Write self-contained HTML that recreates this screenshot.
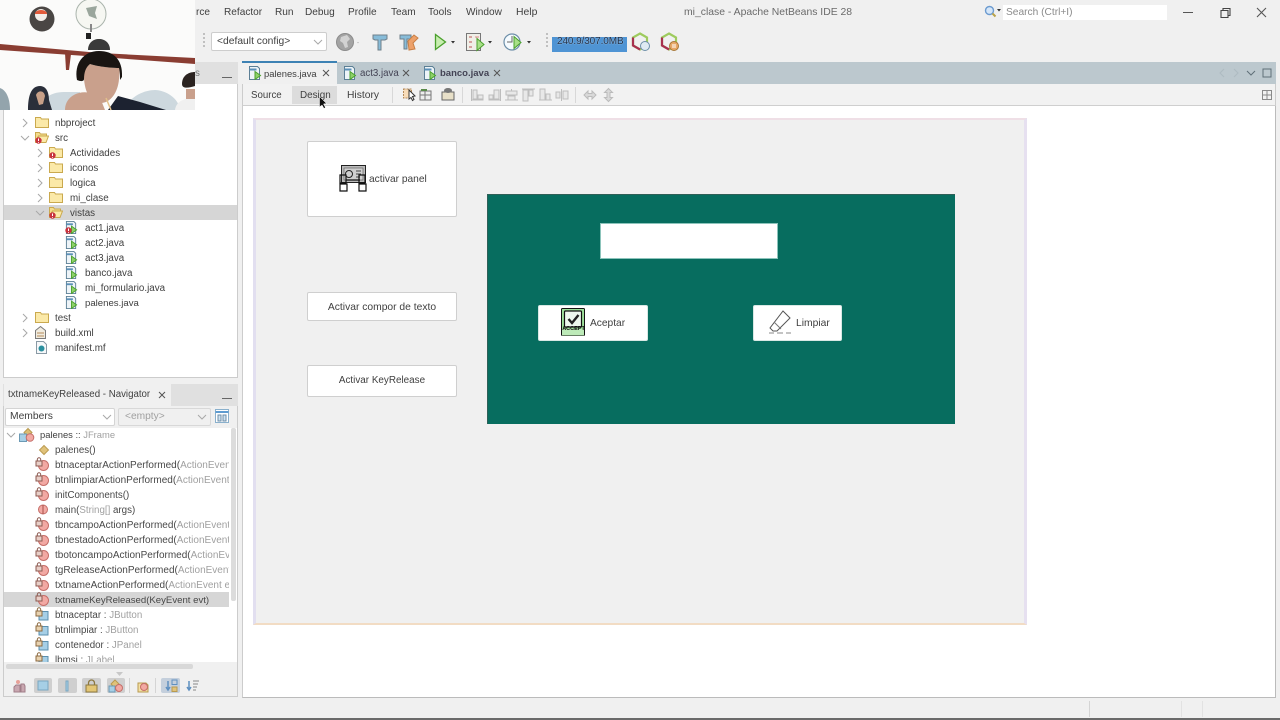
<!DOCTYPE html>
<html lang="es"><head><meta charset="utf-8"><title>mi_clase - Apache NetBeans IDE 28</title>
<style>
html,body{margin:0;padding:0;background:#f0f0f0}
body{width:1280px;height:720px;overflow:hidden;position:relative;font-family:"Liberation Sans",sans-serif;color:#333}
#w{position:absolute;left:0;top:0;width:1280px;height:720px;overflow:hidden;background:#f0f0f0;filter:blur(.35px)}
.b{position:absolute;box-sizing:border-box}
.t{position:absolute;white-space:nowrap;font-size:9.8px;line-height:14px;color:#3f3f3f;margin-top:1px}
.n{margin-top:0;font-size:10.100px}
.m{font-size:9.750px;color:#484848}
.c{font-size:10px}
.g{color:#a0a0a0}
.clip{position:absolute;overflow:hidden;white-space:nowrap}
svg{position:absolute;overflow:visible}
.btn{position:absolute;box-sizing:border-box;background:#fff;border:1px solid #cfcfcf;border-radius:2px}
</style></head><body><div id="w">
<svg width="0" height="0" style="position:absolute">
<defs>
<symbol id="folder" viewBox="0 0 14 12"><path d="M.5 1.500h5l1 1.500h7v8.500h-13z" fill="#fbe9a8" stroke="#caa94e"/></symbol>
<symbol id="ofolder" viewBox="0 0 14 12"><path d="M.5 1.500h4l1 1.500h6v2H3.500l-3 6z" fill="#f4dc8c" stroke="#caa94e"/><path d="M3.500 5h10l-2.500 6.500H.5z" fill="#fbe9a8" stroke="#caa94e"/></symbol>
<symbol id="err" viewBox="0 0 7 7"><circle cx="3.500" cy="3.500" r="3.200" fill="#c8333e"/><path d="M3.500 1.500v2.500M3.500 5v.8" stroke="#fff"/></symbol>
<symbol id="java" viewBox="0 0 14 14"><path d="M1.500.5h8l2 2v11h-10z" fill="#eef4f8" stroke="#5c7f95"/><path d="M1.500 3.500h7" stroke="#5c90b8" stroke-width="2"/><path d="M7 5.500l5.500 4-5.500 4z" fill="#8ed06a" stroke="#4aa02c"/></symbol>
<symbol id="meth" viewBox="0 0 14 14"><circle cx="8.500" cy="8.500" r="5" fill="#f2a9a3" stroke="#c56e69"/><rect x="1" y="4" width="6" height="5" fill="#e8cfc8" stroke="#8c5a50"/><path d="M2.300 4V2.500a1.700 1.700 0 0 1 3.400 0V4" fill="none" stroke="#8c5a50"/></symbol>
<symbol id="field" viewBox="0 0 14 14"><rect x="4" y="4.500" width="9" height="8.500" fill="#a6cfe6" stroke="#5b8fae"/><rect x="1" y="4" width="6" height="5" fill="#e8d2b0" stroke="#8c6a40"/><path d="M2.300 4V2.500a1.700 1.700 0 0 1 3.400 0V4" fill="none" stroke="#8c6a40"/></symbol>
<symbol id="cr" viewBox="0 0 8 10"><path d="M2 1l4 4-4 4" fill="none" stroke="#a8a8a8"/></symbol>
<symbol id="cd" viewBox="0 0 10 8"><path d="M1 2l4 4 4-4" fill="none" stroke="#a8a8a8"/></symbol>
<symbol id="x" viewBox="0 0 8 8"><path d="M1 1l6 6M7 1l-6 6" fill="none" stroke="#555"/></symbol>
</defs></svg>

<!-- menu -->
<div class="t n" style="left:196px;top:6px">rce</div>
<div class="t n" style="left:224px;top:6px">Refactor</div>
<div class="t n" style="left:275px;top:6px">Run</div>
<div class="t n" style="left:305px;top:6px">Debug</div>
<div class="t n" style="left:348px;top:6px">Profile</div>
<div class="t n" style="left:391px;top:6px">Team</div>
<div class="t n" style="left:428px;top:6px">Tools</div>
<div class="t n" style="left:466px;top:6px">Window</div>
<div class="t n" style="left:516px;top:6px;font-size:10.400px">Help</div>
<div class="t n" style="left:684px;top:6px;font-size:10.400px;color:#6a6a6a">mi_clase - Apache NetBeans IDE 28</div>

<svg style="left:984px;top:5px" width="16" height="14"><circle cx="5.500" cy="5.500" r="4" fill="#d5e6f8" stroke="#6c9bd0" stroke-width="1.400"/><path d="M8.500 8.500l3 3" stroke="#b8a24a" stroke-width="2"/><path d="M13 4h4l-2 2.500z" fill="#333"/></svg>
<div class="b" style="left:1003px;top:5px;width:164px;height:15px;background:#fff"></div>
<div class="t n" style="left:1006px;top:5px;margin-top:0;font-size:10.200px;line-height:15px;color:#8a8a8a">Search (Ctrl+I)</div>
<svg style="left:1180px;top:6px" width="90" height="14"><path d="M3 6.500h10" stroke="#555"/><path d="M41 4.500h7v7h-7zM43 4.500V2.500h7v7h-2" fill="none" stroke="#444" stroke-width="1.100"/><path d="M77 2l9 9M86 2l-9 9" stroke="#555" stroke-width="1.100"/></svg>

<!-- toolbar -->
<div class="b" style="left:203px;top:33px;width:2px;height:14px;border-left:2px dotted #c0c0c0"></div>
<div class="b" style="left:211px;top:32px;width:116px;height:19px;background:#fff;border:1px solid #cdcdcd;border-radius:2px"></div>
<div class="t" style="left:217px;top:34px;font-size:10.300px">&lt;default config&gt;</div>
<svg style="left:313px;top:38px" width="10" height="8"><use href="#cd" width="10" height="8"/></svg>
<svg style="left:336px;top:32px" width="24" height="20"><circle cx="9" cy="10" r="8.500" fill="#a3a3a3" stroke="#8c8c8c"/><path d="M5 5l6-2 3 4-3 3 1 5-3 1-2-5-3-2z" fill="#d2d2d2"/><path d="M21 10l2 0-1 1.500z" fill="#bbb"/></svg>
<svg style="left:372px;top:33px" width="16" height="18"><path d="M1 2h14v4l-2 1H9v10H6V7H3L1 6z" fill="#87bcd9" stroke="#6f7f8a"/></svg>
<svg style="left:399px;top:33px" width="20" height="18"><path d="M1 2h11v4H8v10H5V6H1z" fill="#87bcd9" stroke="#6f7f8a"/><path d="M9 8l6-6 4 3-5 5 2 6-6 1z" fill="#eda16a" stroke="#c87f45"/></svg>
<svg style="left:434px;top:33px" width="22" height="18"><path d="M1.500 1.500l10 7.500-10 7.500z" fill="#c8eeb0" stroke="#4aa02c" stroke-width="1.300"/><path d="M17 8h4l-2 2.500z" fill="#333"/></svg>
<svg style="left:466px;top:33px" width="26" height="18"><rect x=".5" y=".5" width="14" height="17" fill="#f0efe8" stroke="#777"/><path d="M3 4h3M3 9h3M3 14h3" stroke="#b55"/><path d="M9 4h4" stroke="#d88"/><path d="M11 5.500l7 6-7 6z" fill="#a8e088" stroke="#4aa02c"/><path d="M22 8h4l-2 2.500z" fill="#333"/></svg>
<svg style="left:503px;top:33px" width="30" height="18"><circle cx="9" cy="9" r="8" fill="#f5fbff" stroke="#6c8ea8" stroke-width="1.200"/><path d="M9 3v6H4" fill="none" stroke="#666"/><path d="M11 3.500l7 6-7 6z" fill="#a8e088" stroke="#4aa02c"/><path d="M24 8h4l-2 2.500z" fill="#333"/></svg>
<div class="b" style="left:546px;top:33px;width:2px;height:14px;border-left:2px dotted #c0c0c0"></div>
<div class="b" style="left:552px;top:37px;width:75px;height:15px;background:#4f94d4"></div>
<div class="t" style="left:557px;top:34px;font-size:10px;color:#1f2f48;letter-spacing:-.1px;text-shadow:0 0 1px #dfe8f2">240.9/307.0MB</div>
<svg style="left:631px;top:32px" width="20" height="20"><path d="M9 1.500l7 4v8l-7 4-7-4v-8z" fill="none" stroke="#9ecb5e" stroke-width="2.200"/><path d="M2 5.500v8l7 4" fill="none" stroke="#a8304f" stroke-width="2.200"/><circle cx="14" cy="14" r="4.500" fill="#dfeaf2" stroke="#6c8ea8"/></svg>
<svg style="left:660px;top:32px" width="20" height="20"><path d="M9 1.500l7 4v8l-7 4-7-4v-8z" fill="none" stroke="#9ecb5e" stroke-width="2.200"/><path d="M2 5.500v8l7 4" fill="none" stroke="#a8304f" stroke-width="2.200"/><circle cx="14" cy="14" r="4.500" fill="#e8a868" stroke="#a87838"/><path d="M13 12v4M15 12v4" stroke="#fff"/></svg>

<!-- left panel top -->
<div class="b" style="left:195px;top:62px;width:43px;height:22px;background:#e0e0e0"></div>
<div class="t" style="left:195px;top:66px;color:#777">s</div>
<div class="b" style="left:222px;top:77px;width:10px;height:1px;background:#666"></div>
<div class="b" style="left:3px;top:84px;width:235px;height:294px;background:#fff;border-left:1px solid #ccc;border-right:1px solid #ccc;border-bottom:1px solid #ccc"></div>
<div class="b" style="left:4px;top:205px;width:233px;height:15px;background:#d6d6d6"></div>

<!-- tree -->
<svg style="left:21px;top:118px" width="8" height="10"><use href="#cr" width="8" height="10"/></svg>
<svg style="left:35px;top:116px" width="14" height="12"><use href="#folder" width="14" height="12"/></svg>
<div class="t" style="left:55px;top:116px">nbproject</div>
<svg style="left:20px;top:134px" width="10" height="8"><use href="#cd" width="10" height="8"/></svg>
<svg style="left:35px;top:131px" width="14" height="12"><use href="#ofolder" width="14" height="12"/></svg>
<svg style="left:35px;top:137px" width="7" height="7"><use href="#err" width="7" height="7"/></svg>
<div class="t" style="left:55px;top:131px">src</div>
<svg style="left:36px;top:148px" width="8" height="10"><use href="#cr" width="8" height="10"/></svg>
<svg style="left:49px;top:146px" width="14" height="12"><use href="#folder" width="14" height="12"/></svg>
<svg style="left:49px;top:152px" width="7" height="7"><use href="#err" width="7" height="7"/></svg>
<div class="t" style="left:70px;top:146px">Actividades</div>
<svg style="left:36px;top:163px" width="8" height="10"><use href="#cr" width="8" height="10"/></svg>
<svg style="left:49px;top:161px" width="14" height="12"><use href="#folder" width="14" height="12"/></svg>
<div class="t" style="left:70px;top:161px">iconos</div>
<svg style="left:36px;top:178px" width="8" height="10"><use href="#cr" width="8" height="10"/></svg>
<svg style="left:49px;top:176px" width="14" height="12"><use href="#folder" width="14" height="12"/></svg>
<div class="t" style="left:70px;top:176px">logica</div>
<svg style="left:36px;top:193px" width="8" height="10"><use href="#cr" width="8" height="10"/></svg>
<svg style="left:49px;top:191px" width="14" height="12"><use href="#folder" width="14" height="12"/></svg>
<div class="t" style="left:70px;top:191px">mi_clase</div>
<svg style="left:35px;top:209px" width="10" height="8"><use href="#cd" width="10" height="8"/></svg>
<svg style="left:49px;top:206px" width="14" height="12"><use href="#ofolder" width="14" height="12"/></svg>
<svg style="left:49px;top:212px" width="7" height="7"><use href="#err" width="7" height="7"/></svg>
<div class="t" style="left:70px;top:206px">vistas</div>
<svg style="left:65px;top:221px" width="13" height="13"><use href="#java" width="13" height="13"/></svg>
<svg style="left:65px;top:227px" width="7" height="7"><use href="#err" width="7" height="7"/></svg>
<div class="t" style="left:85px;top:221px">act1.java</div>
<svg style="left:65px;top:236px" width="13" height="13"><use href="#java" width="13" height="13"/></svg>
<div class="t" style="left:85px;top:236px">act2.java</div>
<svg style="left:65px;top:251px" width="13" height="13"><use href="#java" width="13" height="13"/></svg>
<div class="t" style="left:85px;top:251px">act3.java</div>
<svg style="left:65px;top:266px" width="13" height="13"><use href="#java" width="13" height="13"/></svg>
<div class="t" style="left:85px;top:266px">banco.java</div>
<svg style="left:65px;top:281px" width="13" height="13"><use href="#java" width="13" height="13"/></svg>
<div class="t" style="left:85px;top:281px">mi_formulario.java</div>
<svg style="left:65px;top:296px" width="13" height="13"><use href="#java" width="13" height="13"/></svg>
<div class="t" style="left:85px;top:296px;font-size:9.600px">palenes.java</div>
<svg style="left:21px;top:313px" width="8" height="10"><use href="#cr" width="8" height="10"/></svg>
<svg style="left:35px;top:311px" width="14" height="12"><use href="#folder" width="14" height="12"/></svg>
<div class="t" style="left:55px;top:311px">test</div>
<svg style="left:21px;top:328px" width="8" height="10"><use href="#cr" width="8" height="10"/></svg>
<svg style="left:35px;top:326px" width="12" height="13"><path d="M.5 4.500l5-4 5 4v8h-10z" fill="#f0ece0" stroke="#7a7a7a"/><path d="M2 7h7M2 10h7" stroke="#b58a5a"/></svg>
<div class="t" style="left:55px;top:326px">build.xml</div>
<svg style="left:36px;top:341px" width="11" height="13"><path d="M.5.500h7l3 3v9h-10z" fill="#f6f8fa" stroke="#8a9aa5"/><circle cx="5.500" cy="7.500" r="3" fill="#2a8f9e"/></svg>
<div class="t" style="left:55px;top:341px">manifest.mf</div>

<!-- navigator -->
<div class="b" style="left:3px;top:384px;width:235px;height:313px;background:#fff;border:1px solid #ccc;border-top:0"></div>
<div class="b" style="left:3px;top:384px;width:235px;height:22px;background:#e0e0e0"></div>
<div class="b" style="left:4px;top:384px;width:167px;height:22px;background:#f0f0f0"></div>
<div class="t" style="left:8px;top:387px;font-size:9.700px">txtnameKeyReleased - Navigator</div>
<svg style="left:158px;top:391px" width="8" height="8"><use href="#x" width="8" height="8"/></svg>
<div class="b" style="left:222px;top:398px;width:10px;height:1px;background:#666"></div>
<div class="b" style="left:4px;top:406px;width:233px;height:22px;background:#f0f0f0"></div>
<div class="b" style="left:5px;top:408px;width:110px;height:18px;background:#fff;border:1px solid #d4d4d4;border-radius:2px"></div>
<div class="t" style="left:10px;top:409px;font-size:10.300px">Members</div>
<svg style="left:102px;top:413px" width="10" height="8"><use href="#cd" width="10" height="8"/></svg>
<div class="b" style="left:118px;top:408px;width:93px;height:18px;background:#f0f0f0;border:1px solid #d8d8d8;border-radius:2px"></div>
<div class="t g" style="left:125px;top:409px;font-size:10.200px">&lt;empty&gt;</div>
<svg style="left:197px;top:413px" width="10" height="8"><use href="#cd" width="10" height="8"/></svg>
<svg style="left:215px;top:409px" width="15" height="15"><rect x=".5" y=".5" width="13" height="13" fill="#fff" stroke="#8ab0cc"/><path d="M.5 3h13" stroke="#5e9bd0" stroke-width="2"/><path d="M3 6h3v6H3zM8 6h3v6H8z" fill="#cfe2f0" stroke="#6c8ea8"/></svg>

<div class="b" style="left:4px;top:592px;width:225px;height:15px;background:#d6d6d6"></div>
<svg style="left:6px;top:431px" width="10" height="8"><use href="#cd" width="10" height="8"/></svg>
<svg style="left:19px;top:428px" width="16" height="14"><path d="M9 .5l4 4-4 4-4-4z" fill="#dbbd74" stroke="#b89a50"/><rect x=".5" y="6" width="7" height="7.500" fill="#a6cfe6" stroke="#6c9ab5"/><circle cx="11" cy="9.500" r="3.800" fill="#f2a9a3" stroke="#c56e69"/></svg>
<div class="t" style="left:40px;top:427px;font-size:9.400px">palenes :: <span class="g">JFrame</span></div>
<svg style="left:39px;top:445px" width="10" height="10"><path d="M5 .5L9.500 5 5 9.500.5 5z" fill="#e0c27a" stroke="#bc9c52"/></svg>
<div class="t m" style="left:55px;top:443px">palenes()</div>
<svg style="left:35px;top:457px" width="14" height="14"><use href="#meth" width="14" height="14"/></svg>
<div class="clip t m c" style="left:55px;top:458px;width:174px">btnaceptarActionPerformed(<span class="g">ActionEvent evt)</span></div>
<svg style="left:35px;top:472px" width="14" height="14"><use href="#meth" width="14" height="14"/></svg>
<div class="clip t m c" style="left:55px;top:473px;width:174px">btnlimpiarActionPerformed(<span class="g">ActionEvent evt)</span></div>
<svg style="left:35px;top:487px" width="14" height="14"><use href="#meth" width="14" height="14"/></svg>
<div class="t m" style="left:55px;top:488px">initComponents()</div>
<svg style="left:38px;top:504px" width="10" height="11"><circle cx="5" cy="5.500" r="4.500" fill="#f2a9a3" stroke="#c56e69"/><path d="M5 1v9" stroke="#a8504a"/></svg>
<div class="t m" style="left:55px;top:503px">main(<span class="g">String[]</span> args)</div>
<svg style="left:35px;top:517px" width="14" height="14"><use href="#meth" width="14" height="14"/></svg>
<div class="clip t m c" style="left:55px;top:518px;width:174px">tbncampoActionPerformed(<span class="g">ActionEvent evt)</span></div>
<svg style="left:35px;top:532px" width="14" height="14"><use href="#meth" width="14" height="14"/></svg>
<div class="clip t m c" style="left:55px;top:533px;width:174px">tbnestadoActionPerformed(<span class="g">ActionEvent evt)</span></div>
<svg style="left:35px;top:547px" width="14" height="14"><use href="#meth" width="14" height="14"/></svg>
<div class="clip t m c" style="left:55px;top:548px;width:174px">tbotoncampoActionPerformed(<span class="g">ActionEvent evt)</span></div>
<svg style="left:35px;top:562px" width="14" height="14"><use href="#meth" width="14" height="14"/></svg>
<div class="clip t m c" style="left:55px;top:563px;width:174px">tgReleaseActionPerformed(<span class="g">ActionEvent evt)</span></div>
<svg style="left:35px;top:577px" width="14" height="14"><use href="#meth" width="14" height="14"/></svg>
<div class="clip t m c" style="left:55px;top:578px;width:174px">txtnameActionPerformed(<span class="g">ActionEvent evt)</span></div>
<svg style="left:35px;top:592px" width="14" height="14"><use href="#meth" width="14" height="14"/></svg>
<div class="t m" style="left:55px;top:593px;font-size:9.600px">txtnameKeyReleased(KeyEvent evt)</div>
<svg style="left:35px;top:607px" width="14" height="14"><use href="#field" width="14" height="14"/></svg>
<div class="t m" style="left:55px;top:608px">btnaceptar : <span class="g">JButton</span></div>
<svg style="left:35px;top:622px" width="14" height="14"><use href="#field" width="14" height="14"/></svg>
<div class="t m" style="left:55px;top:623px">btnlimpiar : <span class="g">JButton</span></div>
<svg style="left:35px;top:637px" width="14" height="14"><use href="#field" width="14" height="14"/></svg>
<div class="t m" style="left:55px;top:638px">contenedor : <span class="g">JPanel</span></div>
<svg style="left:35px;top:652px" width="14" height="14"><use href="#field" width="14" height="14"/></svg>
<div class="t m" style="left:55px;top:653px">lbmsj : <span class="g">JLabel</span></div>

<div class="b" style="left:4px;top:662px;width:233px;height:34px;background:#f0f0f0"></div>
<div class="b" style="left:231px;top:428px;width:5px;height:173px;background:#dcdcdc;border-radius:2px"></div>
<div class="b" style="left:6px;top:664px;width:187px;height:5px;background:#d8d8d8;border-radius:2px"></div>
<svg style="left:116px;top:672px" width="8" height="4"><path d="M0 0h7l-3.500 4z" fill="#c8c8c8"/></svg>
<!-- navigator filter buttons -->
<div class="b" style="left:34px;top:678px;width:18px;height:15px;background:#cfcfcf;border-radius:2px"></div>
<div class="b" style="left:58px;top:678px;width:19px;height:15px;background:#cfcfcf;border-radius:2px"></div>
<div class="b" style="left:82px;top:678px;width:19px;height:15px;background:#cfcfcf;border-radius:2px"></div>
<div class="b" style="left:107px;top:678px;width:18px;height:15px;background:#cfcfcf;border-radius:2px"></div>
<div class="b" style="left:161px;top:678px;width:19px;height:15px;background:#c4cfdc;border-radius:2px"></div>
<svg style="left:13px;top:679px" width="190" height="14">
<path d="M3 6h4v7H1V8zM8 5h3l1 2v6H8z" fill="#c9a7b0" stroke="#a07d88"/><circle cx="5" cy="3" r="2" fill="#e8a098"/>
<rect x="25" y="2" width="10" height="9" fill="#a6cfe6" stroke="#7aa7c2"/>
<rect x="53" y="2" width="2" height="10" fill="#a6cfe6" stroke="#7aa7c2"/>
<rect x="73" y="6" width="11" height="7" fill="#e3c675" stroke="#8c7840"/><path d="M75.500 6V4a3 3 0 0 1 6 0v2" fill="none" stroke="#8c7840" stroke-width="1.300"/>
<path d="M102 1l4 4-4 4-4-4z" fill="#e0c27a" stroke="#b89a50"/><rect x="96" y="7" width="6" height="6" fill="#a6cfe6" stroke="#6c9ab5"/><circle cx="106" cy="9" r="3.500" fill="#f2a9a3" stroke="#c56e69"/>
<path d="M125 4h8l2 2v7h-10z" fill="#f3e0a4" stroke="#b89a50"/><circle cx="131" cy="8" r="3.500" fill="#f2a9a3" stroke="#c56e69"/>
<path d="M155 2v8M153 8l2 3 2-3" fill="none" stroke="#5e8fc0" stroke-width="1.500"/><rect x="159" y="1" width="5" height="4.500" fill="none" stroke="#5e8fc0"/><rect x="159" y="8" width="5" height="4.500" fill="#e0c27a" stroke="#b89a50"/>
<path d="M176 2v8M174 8l2 3 2-3" fill="none" stroke="#5e8fc0" stroke-width="1.500"/><path d="M180 2h6M180 5h5M180 8h4M180 11h3" stroke="#888"/>
</svg>
<div class="b" style="left:129px;top:678px;width:1px;height:15px;background:#d4d4d4"></div>
<div class="b" style="left:155px;top:678px;width:1px;height:15px;background:#d4d4d4"></div>

<!-- editor -->
<div class="b" style="left:242px;top:62px;width:1034px;height:22px;background:#bcc8ce"></div>
<div class="b" style="left:242px;top:61px;width:95px;height:23px;background:#f0f0f0;border-top:2px solid #3d82b4"></div>
<svg style="left:248px;top:66px" width="14" height="14"><use href="#java" width="14" height="14"/></svg>
<div class="t" style="left:264px;top:66px;font-size:9.400px">palenes.java</div>
<svg style="left:322px;top:69px" width="8" height="8"><use href="#x" width="8" height="8"/></svg>
<svg style="left:343px;top:66px" width="14" height="14"><use href="#java" width="14" height="14"/></svg>
<div class="t" style="left:360px;top:66px;font-size:9.700px;color:#445">act3.java</div>
<svg style="left:402px;top:69px" width="8" height="8"><use href="#x" width="8" height="8"/></svg>
<svg style="left:423px;top:66px" width="14" height="14"><use href="#java" width="14" height="14"/></svg>
<div class="t" style="left:440px;top:66px;font-size:9.500px;font-weight:bold;color:#445">banco.java</div>
<svg style="left:493px;top:69px" width="8" height="8"><use href="#x" width="8" height="8"/></svg>
<svg style="left:1218px;top:67px" width="56" height="12"><path d="M6 2L2 6l4 4M16 2l4 4-4 4" fill="none" stroke="#aebbc2"/><path d="M29 4l4 4 4-4" fill="none" stroke="#5f6f78"/><rect x="45" y="2" width="8" height="8" fill="none" stroke="#5f6f78"/></svg>

<div class="b" style="left:242px;top:84px;width:1034px;height:22px;background:#f2f2f2;border-bottom:1px solid #cfcfcf;border-left:1px solid #ccc;border-right:1px solid #ccc"></div>
<div class="t" style="left:251px;top:88px;font-size:9.700px">Source</div>
<div class="b" style="left:292px;top:86px;width:45px;height:18px;background:#dcdcdc"></div>
<div class="t" style="left:300px;top:88px;font-size:9.900px">Design</div>
<div class="t" style="left:347px;top:88px;font-size:10.300px">History</div>
<div class="b" style="left:392px;top:87px;width:1px;height:16px;background:#d8d8d8"></div>
<svg style="left:402px;top:87px" width="54" height="16"><rect x="1.500" y="2" width="8" height="9" fill="#f8dcb8" stroke="#b58a5a" stroke-dasharray="2 1"/><path d="M7 3l6 6-2.500.5 1.500 3-1.500 1-1.500-3L7 12z" fill="#fff" stroke="#333"/><rect x="18" y="4" width="11" height="9" fill="#eee" stroke="#777"/><path d="M18 8h11M23 4v9" stroke="#777"/><path d="M19 3h6" stroke="#5a8a4a" stroke-width="2"/><rect x="40" y="5" width="12" height="8" fill="#e8e0c8" stroke="#666"/><ellipse cx="46" cy="3.500" rx="4" ry="2.500" fill="#777"/></svg>
<div class="b" style="left:462px;top:87px;width:1px;height:16px;background:#d8d8d8"></div>
<svg style="left:470px;top:87px" width="100" height="16"><g fill="#e8e8e8" stroke="#bdbdbd"><path d="M1.500 2v12M13.500 13h-12"/><rect x="3" y="3" width="4" height="9"/><rect x="8" y="8" width="5" height="4"/><path d="M30.500 2v12M18.500 13h12"/><rect x="24" y="3" width="5" height="9"/><rect x="19" y="8" width="4" height="4"/><path d="M35 13h13M41.500 2v2"/><rect x="36" y="4" width="11" height="4"/><rect x="38" y="9" width="7" height="4"/><path d="M52 2h13"/><rect x="53" y="3" width="5" height="11"/><rect x="59" y="3" width="4" height="6"/><path d="M69 13h13"/><rect x="70" y="2" width="5" height="11"/><rect x="76" y="7" width="4" height="6"/><path d="M91.500 2v12"/><rect x="86" y="5" width="4" height="6"/><rect x="93" y="4" width="5" height="8"/></g></svg>
<div class="b" style="left:575px;top:87px;width:1px;height:16px;background:#d8d8d8"></div>
<svg style="left:583px;top:88px" width="34" height="14"><path d="M1 7l4-4v2.500h4V3l4 4-4 4V8.500H5V11z" fill="#d9d9d9" stroke="#bbb"/><path d="M25.500 .5l4 4h-2.500v5h2.500l-4 4-4-4H24v-5h-2.500z" fill="#d9d9d9" stroke="#bbb"/></svg>
<svg style="left:1262px;top:90px" width="10" height="10"><rect x=".5" y=".5" width="9" height="9" fill="none" stroke="#8a8a8a"/><path d="M5 .5v9M.5 5h9" stroke="#8a8a8a"/></svg>

<div class="b" style="left:242px;top:106px;width:1034px;height:592px;background:#fff;border-left:1px solid #ccc;border-right:1px solid #bbb;border-bottom:1px solid #bbb"></div>

<!-- form -->
<div class="b" style="left:253px;top:118px;width:774px;height:507px;background:#f0f0f0;border-left:3px solid #e2dff0;border-right:3px solid #e6e0f0;border-top:2px solid #efdfe6;border-bottom:2px solid #f2dcc4"></div>
<div class="btn" style="left:307px;top:141px;width:150px;height:76px"></div>
<svg style="left:339px;top:165px" width="28" height="27"><rect x="2.500" y=".5" width="24" height="17" fill="#bcbcbc" stroke="#222"/><rect x="5" y="3" width="19" height="12" fill="#cfcfcf" stroke="#555" stroke-width=".6"/><circle cx="10" cy="9" r="3.500" fill="none" stroke="#222"/><path d="M17 6h5M17 9h5M17 12h4" stroke="#444"/><path d="M1 10h6v8H1zM20 10h6v8h-6z" fill="none" stroke="#111" stroke-width="1.200"/><path d="M1 19h7v7H1zM20 19h7v7h-7zM7 15h14" fill="#fff" stroke="#111" stroke-width="1.200"/></svg>
<div class="t" style="left:369px;top:172px;font-size:10.200px">activar panel</div>
<div class="btn" style="left:307px;top:292px;width:150px;height:29px"></div>
<div class="t" style="left:307px;top:300px;width:150px;text-align:center;font-size:10.300px">Activar compor de texto</div>
<div class="btn" style="left:307px;top:365px;width:150px;height:32px"></div>
<div class="t" style="left:307px;top:373px;width:150px;text-align:center;font-size:9.900px">Activar KeyRelease</div>

<div class="b" style="left:487px;top:194px;width:468px;height:230px;background:#076d5f;border-top:1px solid #2f5f57;border-left:1px solid #2f5f57"></div>
<div class="b" style="left:600px;top:223px;width:178px;height:36px;background:#fff;border:1px solid #8cc4bb"></div>
<div class="btn" style="left:538px;top:305px;width:110px;height:36px;border-color:#d8e8e4"></div>
<svg style="left:561px;top:308px" width="25" height="29"><rect x=".5" y=".5" width="23" height="27" rx="1" fill="#9ee09a" stroke="#111"/><rect x="3.500" y="3" width="17" height="16" rx="1" fill="#eef8ee" stroke="#111" stroke-width="1.200"/><path d="M7.500 11l3.500 4 6.500-8" fill="none" stroke="#222" stroke-width="2.400"/><rect x="1" y="21" width="22" height="6.500" fill="#bdeab8"/></svg>
<div class="t" style="left:561px;top:323px;font-size:5.500px;line-height:11px;width:25px;text-align:center;font-weight:bold;color:#111">ACCEPT</div>
<div class="t" style="left:590px;top:316px;font-size:10.200px">Aceptar</div>
<div class="btn" style="left:753px;top:305px;width:89px;height:36px;border-color:#d8e8e4"></div>
<svg style="left:768px;top:310px" width="24" height="25"><path d="M15 1l7 7L9 21H5l-3-3z" fill="#fff" stroke="#555"/><path d="M6 12l7 7" stroke="#777"/><path d="M1 23h5M9 23h6M18 23h5" stroke="#888"/></svg>
<div class="t" style="left:796px;top:316px;font-size:10.300px">Limpiar</div>

<!-- status bar -->
<div class="b" style="left:1089px;top:701px;width:1px;height:16px;background:#d4d4d4"></div>
<div class="b" style="left:1181px;top:701px;width:1px;height:16px;background:#e2e2e2"></div>
<div class="b" style="left:1202px;top:701px;width:1px;height:16px;background:#e2e2e2"></div>
<div class="b" style="left:0;top:718px;width:1280px;height:2px;background:#6a6a6a"></div>

<!-- webcam -->
<svg style="left:0;top:0" width="195" height="110" viewBox="0 0 195 110">
<rect width="195" height="110" fill="#fbfbfa"/>
<path d="M0 44l100 9 95 5v6l-95-7L0 50z" fill="#8a3d32"/>
<path d="M65 53l6 1-2 16h-3z" fill="#8a3d32"/>
<path d="M88 50c0-7 5-11 11-11s11 4 11 11z" fill="#3a3a3a"/>
<circle cx="42" cy="19" r="12.500" fill="#4a4644"/><circle cx="41" cy="15" r="6" fill="#f2ede8"/><path d="M35 14a6 4 0 0 1 12 0z" fill="#e25a3a"/>
<circle cx="91" cy="14" r="15" fill="#f6f7f2" stroke="#aab4ac"/><path d="M86 8l11-2-2 7 2 6-8-3z" fill="#9aa69c"/><rect x="90" y="24" width="2" height="8" fill="#888"/><rect x="86" y="33" width="5" height="6" fill="#222"/>
<path d="M40 110c0-10 10-18 24-18h16v18zM125 110c4-14 20-20 30-20s24 8 25 20z" fill="#cdd8de"/>
<path d="M0 88c6 2 10 10 10 22H0z" fill="#93a4ac"/>
<path d="M28 110c0-14 3-24 12-24 8 0 9 10 9 14l3 10z" fill="#2a2f3a"/>
<path d="M36 95c2-5 8-5 9 1l-2 8-4 1z" fill="#c7a088"/>
<path d="M118 96l22 6 26 8h-58z" fill="#1c2230"/>
<path d="M84 70c-1 18 4 32 17 33 9 0 17-10 18-24l1-11c-10 0-24-2-30-4-3 2-5 4-6 6z" fill="#c9a08c"/>
<path d="M77 80c-3-16 6-29 22-29 14 0 24 8 23 26l-2 3c0-5 0-8-1-12-10 0-23-2-29-4-4 3-6 8-6 15 0 2-2 3-7 1z" fill="#191512"/>
<path d="M65 110c0-9 6-15 14-17 8-2 16 0 22 7l4 10z" fill="#c9a08c"/>
<path d="M106 98l5 12" stroke="#e2c08a" stroke-width="1.500"/>
<path d="M175 110c1-8 8-12 20-12v12z" fill="#f0f0f0"/><path d="M186 89h9v10h-9z" fill="#c9a08c"/><path d="M182 84c0-8 6-12 13-12v14c-6 2-13 3-13-2z" fill="#2b2320"/>
</svg>

<!-- cursor -->
<svg style="left:319px;top:96px" width="9" height="13"><path d="M.5.500l7 7-3 .5 2 3.500-1.500 1-2-3.500-2.500 2z" fill="#111" stroke="#fff" stroke-width=".5"/></svg>
</div></body></html>
